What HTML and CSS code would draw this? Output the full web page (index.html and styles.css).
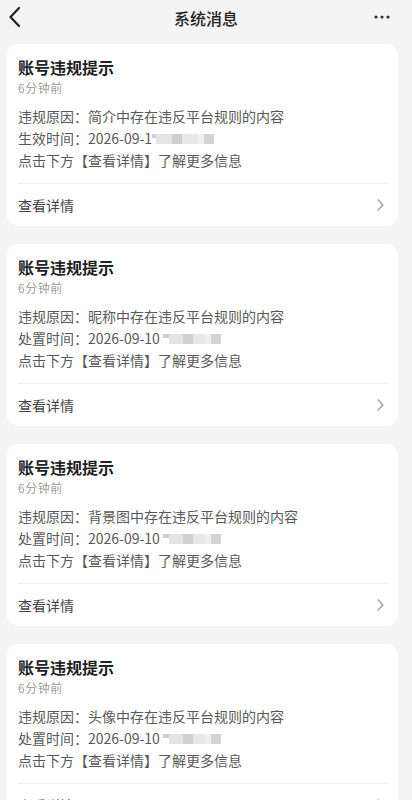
FILE: index.html
```html
<!DOCTYPE html>
<html lang="zh">
<head>
<meta charset="utf-8">
<link rel="stylesheet" href="styles.css">
</head>
<body>
<header class="nav">
  <svg class="nav-back" width="14" height="22" viewBox="0 0 14 22"><path d="M11 2 L2.5 11 L11 20" fill="none" stroke="#222" stroke-width="2.2" stroke-linecap="round" stroke-linejoin="round"/></svg>
  <div class="nav-title">系统消息</div>
  <svg class="nav-more" width="16" height="4" viewBox="0 0 16 4"><circle cx="2" cy="2" r="1.6" fill="#333"/><circle cx="8" cy="2" r="1.6" fill="#333"/><circle cx="14" cy="2" r="1.6" fill="#333"/></svg>
</header>
<main class="list">
  <section class="card">
    <div class="card-body">
      <div class="title">账号违规提示</div>
      <div class="time">6分钟前</div>
      <div class="lines">
        <div>违规原因：简介中存在违反平台规则的内容</div>
        <div>生效时间：2026-09-1<span class="blur w1"><i></i><i></i><i></i><i></i><i></i><i></i></span></div>
        <div>点击下方【查看详情】了解更多信息</div>
      </div>
    </div>
    <div class="footer"><span>查看详情</span><svg width="7" height="12" viewBox="0 0 7 12"><path d="M1.2 1 L5.8 6 L1.2 11" fill="none" stroke="#9a9a9a" stroke-width="1.3" stroke-linecap="round" stroke-linejoin="round"/></svg></div>
  </section>
  <section class="card">
    <div class="card-body">
      <div class="title">账号违规提示</div>
      <div class="time">6分钟前</div>
      <div class="lines">
        <div>违规原因：昵称中存在违反平台规则的内容</div>
        <div>处置时间：2026-09-10 <span class="blur w2"><i></i><i></i><i></i><i></i><i></i><i></i></span></div>
        <div>点击下方【查看详情】了解更多信息</div>
      </div>
    </div>
    <div class="footer"><span>查看详情</span><svg width="7" height="12" viewBox="0 0 7 12"><path d="M1.2 1 L5.8 6 L1.2 11" fill="none" stroke="#9a9a9a" stroke-width="1.3" stroke-linecap="round" stroke-linejoin="round"/></svg></div>
  </section>
  <section class="card">
    <div class="card-body">
      <div class="title">账号违规提示</div>
      <div class="time">6分钟前</div>
      <div class="lines">
        <div>违规原因：背景图中存在违反平台规则的内容</div>
        <div>处置时间：2026-09-10 <span class="blur w2"><i></i><i></i><i></i><i></i><i></i><i></i></span></div>
        <div>点击下方【查看详情】了解更多信息</div>
      </div>
    </div>
    <div class="footer"><span>查看详情</span><svg width="7" height="12" viewBox="0 0 7 12"><path d="M1.2 1 L5.8 6 L1.2 11" fill="none" stroke="#9a9a9a" stroke-width="1.3" stroke-linecap="round" stroke-linejoin="round"/></svg></div>
  </section>
  <section class="card">
    <div class="card-body">
      <div class="title">账号违规提示</div>
      <div class="time">6分钟前</div>
      <div class="lines">
        <div>违规原因：头像中存在违反平台规则的内容</div>
        <div>处置时间：2026-09-10 <span class="blur w2"><i></i><i></i><i></i><i></i><i></i><i></i></span></div>
        <div>点击下方【查看详情】了解更多信息</div>
      </div>
    </div>
    <div class="footer"><span>查看详情</span><svg width="7" height="12" viewBox="0 0 7 12"><path d="M1.2 1 L5.8 6 L1.2 11" fill="none" stroke="#9a9a9a" stroke-width="1.3" stroke-linecap="round" stroke-linejoin="round"/></svg></div>
  </section>
</main>
</body>
</html>
```
FILE: styles.css
```css
* { box-sizing: border-box; }
html, body { margin: 0; padding: 0; }
body {
  background: #f4f4f4;
  font-family: "Noto Sans CJK SC", "Noto Sans", "Liberation Sans", sans-serif;
  color: #333;
  width: 412px;
  height: 800px;
  overflow: hidden;
}
.nav {
  height: 36px;
  display: flex;
  align-items: center;
  justify-content: space-between;
  padding: 0 22px 0 8px;
  position: relative;
}
.nav-back { display: block; margin-top: -2px; }
.nav-title {
  position: absolute;
  left: 0; right: 0;
  text-align: center;
  font-size: 16px;
  font-weight: 500;
  color: #222;
  line-height: 34px;
  pointer-events: none;
}
.nav-more { display: block; margin-top: -2px; }
.list {
  padding: 8px 14px 0 7px;
  display: flex;
  flex-direction: column;
  gap: 18px;
}
.card {
  background: #fff;
  border-radius: 12px;
  padding: 0 11px;
}
.card-body {
  padding: 11px 0 12px;
  border-bottom: 1px solid #eeeeee;
}
.title {
  font-size: 16px;
  font-weight: 700;
  line-height: 24px;
  color: #222;
}
.time {
  font-size: 12px;
  line-height: 18px;
  color: #a0a0a0;
  letter-spacing: 0.5px;
}
.lines {
  margin-top: 8px;
  font-size: 14px;
  line-height: 22px;
  color: #595959;
}
.blur {
  display: inline-flex;
  align-items: center;
  vertical-align: middle;
  height: 14px;
  margin-top: -3px;
}
.blur i {
  display: inline-block;
  height: 10px;
}
.blur i:nth-child(1) { width: 6px; height: 4px; background: #d0d0d0; align-self: flex-start; margin-top: 2px; }
.blur i:nth-child(2) { width: 14px; background: #e4e4e4; }
.blur i:nth-child(3) { width: 10px; background: #cfcfcf; }
.blur i:nth-child(4) { width: 12px; background: #e8e8e8; }
.blur i:nth-child(5) { width: 6px; background: #f0f0f0; }
.blur i:nth-child(6) { width: 10px; background: #d4d4d4; }
.w1 i:nth-child(1) { width: 4px; }
.w1 i:nth-child(2) { width: 16px; }
.w1 i:nth-child(4) { width: 16px; }
.footer {
  height: 42px;
  display: flex;
  align-items: center;
  justify-content: space-between;
  font-size: 14px;
  color: #444;
  padding-right: 3px;
}
.footer svg { display: block; }
```
